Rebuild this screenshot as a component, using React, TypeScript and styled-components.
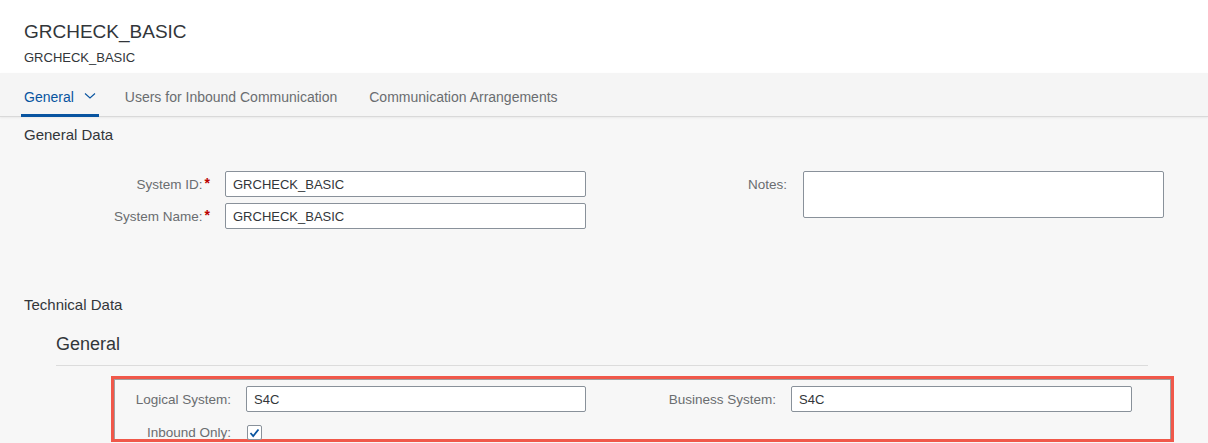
import styled, { createGlobalStyle } from "styled-components";
import { FC } from "react";

const GlobalStyle = createGlobalStyle`
    html, body {
        margin: 0;
        padding: 0;
        background: #f7f7f7;
        font-family: "Liberation Sans", Arial, sans-serif;
        color: #32363a;
    }
`;

const App: FC = () => {
    return <>
        <GlobalStyle />
        <Header>
            <Title>GRCHECK_BASIC</Title>
            <Subtitle>GRCHECK_BASIC</Subtitle>
        </Header>
        <TabBar>
            <Tab $active>
                General
                <svg width="12" height="8" viewBox="0 0 12 8">
                    <path d="M1 1.5 L6 6 L11 1.5" fill="none" stroke="#0854a0" strokeWidth="1.1" />
                </svg>
            </Tab>
            <Tab>Users for Inbound Communication</Tab>
            <Tab>Communication Arrangements</Tab>
        </TabBar>
        <Content>
            <SectionTitle>General Data</SectionTitle>
            <FormGrid>
                <Column>
                    <Row $labelWidth={201}>
                        <Label>System ID:<Req>*</Req></Label>
                        <Input readOnly value="GRCHECK_BASIC" />
                    </Row>
                    <Row $labelWidth={201}>
                        <Label>System Name:<Req>*</Req></Label>
                        <Input readOnly value="GRCHECK_BASIC" />
                    </Row>
                </Column>
                <Column>
                    <Row $labelWidth={203} $top>
                        <Label $pad>Notes:</Label>
                        <TextArea readOnly />
                    </Row>
                </Column>
            </FormGrid>
            <SectionTitle $technical>Technical Data</SectionTitle>
            <SubSection>
                <SubTitle>General</SubTitle>
                <Highlight>
                    <HighlightGrid>
                        <Column $gap={13}>
                            <Row $labelWidth={135} $inputWidth={340}>
                                <Label>Logical System:</Label>
                                <Input readOnly value="S4C" />
                            </Row>
                            <Row $labelWidth={135} $short>
                                <Label>Inbound Only:</Label>
                                <Check>
                                    <svg width="11" height="10" viewBox="0 0 11 10">
                                        <path d="M1.5 5 L4.2 8 L9.5 1.5" fill="none" stroke="#0854a0" strokeWidth="1.8" />
                                    </svg>
                                </Check>
                            </Row>
                        </Column>
                        <Column>
                            <Row $labelWidth={180} $inputWidth={341}>
                                <Label>Business System:</Label>
                                <Input readOnly value="S4C" />
                            </Row>
                        </Column>
                    </HighlightGrid>
                </Highlight>
            </SubSection>
        </Content>
    </>
}

const Header = styled.header`
    background: #fff;
    height: 73px;
    padding: 20px 24px 0;
    box-sizing: border-box;
`;

const Title = styled.h1`
    margin: 0;
    font-size: 19px;
    font-weight: normal;
    line-height: 24px;
    color: #32363a;
`;

const Subtitle = styled.div`
    margin-top: 5px;
    font-size: 13px;
    line-height: 18px;
    color: #32363a;
`;

const TabBar = styled.nav`
    display: flex;
    height: 44px;
    padding-left: 21px;
    background: #f5f5f5;
    border-bottom: 1px solid #d9d9d9;
    box-shadow: 0 1px 2px rgba(0, 0, 0, 0.06);
    box-sizing: border-box;
`;

const Tab = styled.div<{ $active?: boolean }>`
    display: flex;
    align-items: center;
    gap: 10px;
    padding: 7px ${p => p.$active ? "3px 0 3px" : "16px 0"};
    margin-right: ${p => p.$active ? "10px" : "0"};
    font-size: 14px;
    color: ${p => p.$active ? "#0854a0" : "#6a6d70"};
    border-bottom: 3px solid ${p => p.$active ? "#0854a0" : "transparent"};
    margin-bottom: -1px;
    svg { margin-top: -2px; }
`;

const Content = styled.main`
    padding: 9px 0 0 24px;
`;

const SectionTitle = styled.h2<{ $technical?: boolean }>`
    margin: 0;
    padding-top: ${p => p.$technical ? "67px" : "0"};
    font-size: 15px;
    font-weight: normal;
    line-height: 18px;
    color: #32363a;
`;

const FormGrid = styled.div`
    display: grid;
    grid-template-columns: 576px 577px;
    margin-top: 27px;
`;

const Column = styled.div<{ $gap?: number }>`
    display: flex;
    flex-direction: column;
    gap: ${p => p.$gap ?? 6}px;
`;

const Row = styled.div<{ $labelWidth: number; $inputWidth?: number; $top?: boolean; $short?: boolean }>`
    display: grid;
    grid-template-columns: ${p => p.$labelWidth}px ${p => p.$inputWidth ?? 361}px;
    align-items: ${p => p.$top ? "start" : "center"};
    height: ${p => p.$short ? "14px" : "auto"};
`;

const Label = styled.label<{ $pad?: boolean }>`
    font-size: 13.5px;
    color: #6a6d70;
    text-align: right;
    padding-right: ${p => p.$pad ? "16px" : "15px"};
    padding-top: ${p => p.$pad ? "6px" : "0"};
    white-space: nowrap;
`;

const Req = styled.span`
    color: #bb0000;
    font-size: 14px;
    font-weight: bold;
    margin-left: 2px;
    position: relative;
    top: -1px;
`;

const Input = styled.input`
    box-sizing: border-box;
    height: 26px;
    width: 100%;
    border: 1px solid #89919a;
    border-radius: 2px;
    background: #fff;
    padding: 0 7px;
    font-family: "Liberation Sans", Arial, sans-serif;
    font-size: 13px;
    color: #32363a;
    outline: none;
`;

const TextArea = styled.textarea`
    box-sizing: border-box;
    height: 47px;
    width: 100%;
    border: 1px solid #89919a;
    border-radius: 2px;
    background: #fff;
    resize: none;
    outline: none;
`;

const SubSection = styled.section`
    margin-top: 19px;
    padding-left: 32px;
`;

const SubTitle = styled.h3`
    margin: 0;
    font-size: 18px;
    font-weight: normal;
    line-height: 22px;
    color: #32363a;
    padding-bottom: 10px;
    border-bottom: 1px solid #dcdcdc;
    width: 1092px;
`;

const Highlight = styled.div`
    margin: 10px 0 0 55px;
    width: 1063px;
    height: 66px;
    box-sizing: border-box;
    border: 3px solid #f0584a;
    box-shadow: inset 1px 1px 0 #a0a0a0, inset -1px 0 0 #a0a0a0;
    padding-top: 7px;
`;

const HighlightGrid = styled.div`
    display: grid;
    grid-template-columns: 500px 521px;
    margin-left: -3px;
`;

const Check = styled.span`
    display: flex;
    align-items: center;
    justify-content: center;
    width: 13px;
    height: 13px;
    margin-left: 1px;
    border: 1px solid #89919a;
    border-radius: 2px;
    background: #fff;
`;

export default App;
